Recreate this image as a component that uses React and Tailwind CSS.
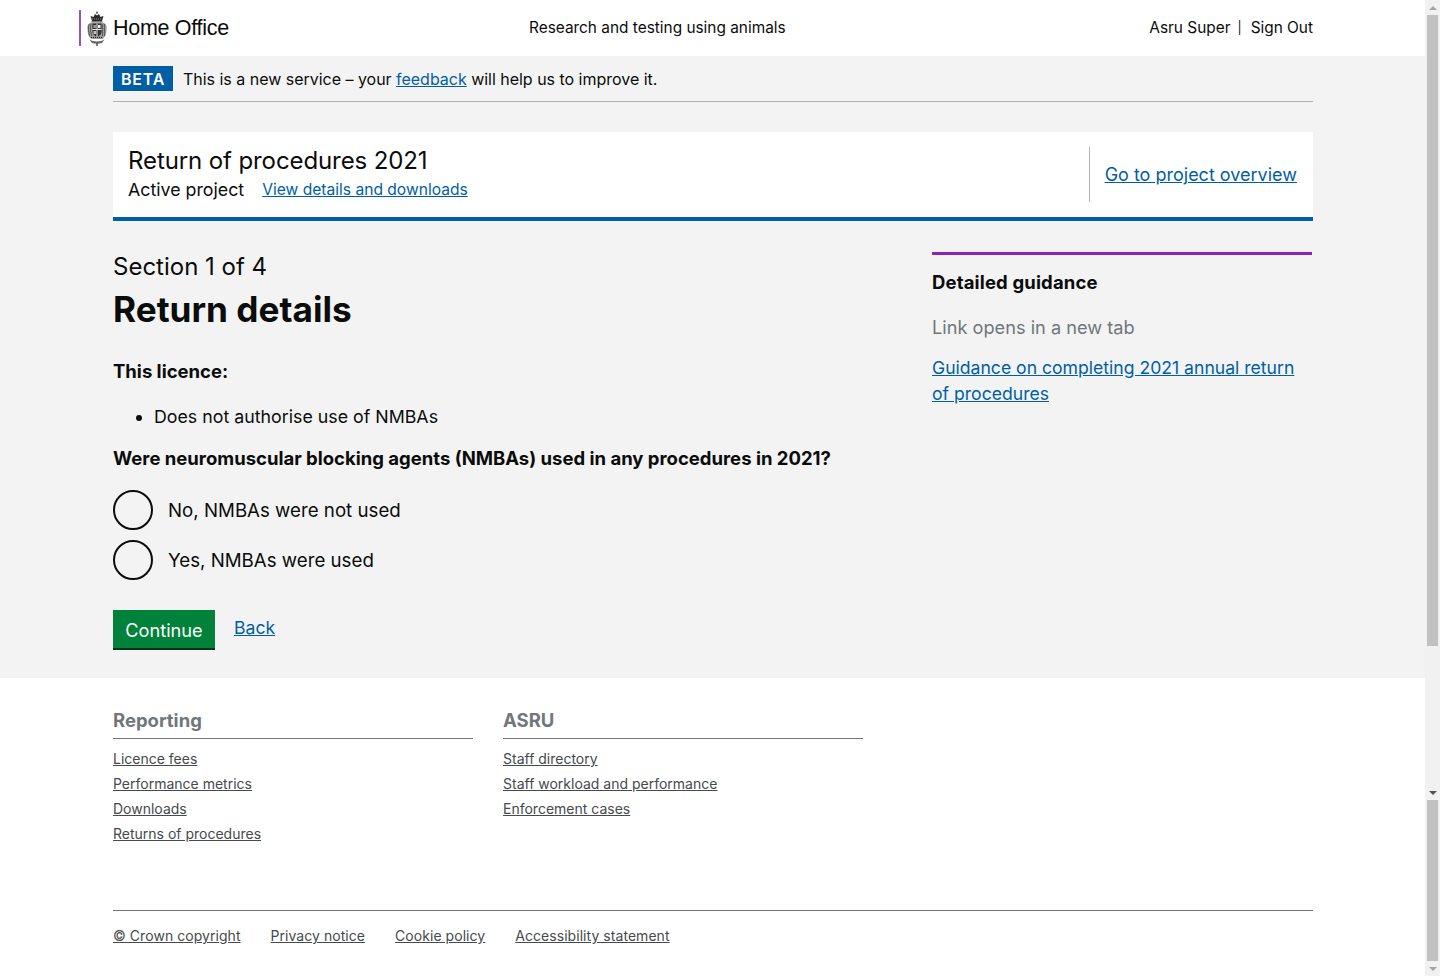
import React from 'react';

const Crest = () => (
  <svg width="20" height="35" viewBox="0 0 20 35" className="block">
    {/* crown */}
    <path d="M10 0l1.200 2.500h-2.400z" fill="#333" />
    <path d="M5 10 L3.500 5 L6.500 6 L8 3 L10 4.500 L12 3 L13.500 6 L16.500 5 L15 10z" fill="#2a2a2a" />
    <path d="M5 8h10" stroke="#aaa" strokeWidth="0.800" strokeDasharray="1 1" />
    <rect x="4.500" y="10" width="11" height="1.500" fill="#777" />
    {/* supporters */}
    <path d="M4 11.500 C1 12.500 0 15 0.500 18 C0.500 23 1.500 26 4.500 28 L15.500 28 C18.500 26 19.500 23 19.500 18 C20 15 19 12.500 16 11.500z" fill="#9a9a9a" />
    <path d="M1.500 14h3M1 16h4M1 18h4M1 20h4M1.500 22h3.500M2 24h3M15 14h3.500M15 16h4M15 18h4M15 20h4M15 22h3.500M15 24h3M4 26.500h12" stroke="#222" strokeWidth="1" strokeDasharray="1 1" />
    {/* shield */}
    <path d="M5.500 12.500h9v8c0 3-2.500 4.500-4.500 5.500C8 25 5.500 23.500 5.500 20.500z" fill="#333" />
    <path d="M10 12.500v13.500M5.500 18.500h9" stroke="#e5e5e5" strokeWidth="1" />
    <rect x="11" y="14" width="2.500" height="3" fill="#f0f0f0" />
    <rect x="6.500" y="20" width="2.500" height="3" fill="#c4c4c4" />
    <rect x="6.500" y="14" width="2.500" height="3" fill="#999" />
    {/* motto */}
    <path d="M2.500 28.500 C6 31 14 31 17.500 28.500 L15 32 C12 33 8 33 5 32z" fill="#666" />
    <path d="M10 32v3" stroke="#555" strokeWidth="1.500" />
  </svg>
);

const Scrollbar = () => (
  <div className="w-[15px] h-full shrink-0 flex flex-col bg-[#f1f1f1] pl-[2px] pr-[2px]">
    <div className="h-[15px] shrink-0 flex items-center justify-center">
      <div className="w-0 h-0 border-l-[4px] border-r-[4px] border-b-[4px] border-l-transparent border-r-transparent border-b-[#a3a3a3]" />
    </div>
    <div className="h-[631px] shrink-0 bg-[#c1c1c1]" />
    <div className="h-[139px] shrink-0" />
    <div className="h-[15px] shrink-0 flex items-center justify-center">
      <div className="w-0 h-0 border-l-[4px] border-r-[4px] border-t-[4px] border-l-transparent border-r-transparent border-t-[#505050]" />
    </div>
    <div className="h-[161px] shrink-0 bg-[#c1c1c1]" />
    <div className="h-[15px] shrink-0 flex items-center justify-center">
      <div className="w-0 h-0 border-l-[4px] border-r-[4px] border-t-[4px] border-l-transparent border-r-transparent border-t-[#a3a3a3]" />
    </div>
  </div>
);

const Radio = ({ label }) => (
  <label className="flex items-center h-10 gap-[15px]">
    <span className="w-10 h-10 rounded-full border-2 border-[#0b0c0c] shrink-0" />
    <span className="pt-[2px] text-[18.7px] text-[#0b0c0c]">{label}</span>
  </label>
);

const FooterCol = ({ title, links }) => (
  <div className="w-[360px]">
    <h3 className="text-[18.500px] leading-[25px] font-bold text-[#6f777b] pb-[5px] border-b border-[#6f777b]">{title}</h3>
    <ul className="mt-[7px]">
      {links.map(l => (
        <li key={l} className="h-[25px] leading-[25px] text-[14px]">
          <a href="#" className="underline text-[#454a4c]">{l}</a>
        </li>
      ))}
    </ul>
  </div>
);

export default function App() {
  return (
    <div className="flex w-full h-[976px] overflow-hidden bg-white text-[#0b0c0c] font-['Inter',sans-serif]">
      <div className="flex-1 min-w-0 flex flex-col">
        <header className="h-14 bg-white flex items-start pl-[79px] pr-[112px] shrink-0">
          <div className="flex items-center w-[450px] h-9 mt-[10px] border-l-2 border-[#9b51b8] pl-[6px]">
            <Crest />
            <span className="ml-[6px] text-[21.500px] tracking-[-0.3px] font-['Liberation_Sans',sans-serif] text-[#0b0c0c]">Home Office</span>
          </div>
          <div className="text-[15.400px] leading-[55px]">Research and testing using animals</div>
          <div className="ml-auto text-[15.400px] leading-[55px] flex">
            <a href="#">Asru Super</a>
            <span className="ml-[7px] mr-[9px] text-[12.500px]">|</span>
            <a href="#">Sign Out</a>
          </div>
        </header>

        <main className="flex-1 bg-[#f3f3f3] pl-[113px] pr-[112px] min-h-0">
          <div className="h-[36px] mt-[10px] border-b border-[#b1b4b6] flex items-start">
            <strong className="h-[25px] w-[60px] bg-[#005ea5] text-white text-[16px] tracking-[0.8px] font-semibold leading-[26px] text-center">BETA</strong>
            <p className="ml-[10px] text-[16px] leading-[26px] tracking-[-0.02px]">
              This is a new service – your <a href="#" className="underline text-[#005ea5]">feedback</a> will help us to improve it.
            </p>
          </div>

          <div className="mt-[30px] h-[89px] bg-white border-b-4 border-[#005ea5] flex items-center justify-between pl-[15px] pr-[16px]">
            <div>
              <div className="text-[24px] leading-[30px] tracking-[-0.1px]">Return of procedures 2021</div>
              <div className="flex items-center mt-[1px] leading-[26px]">
                <span className="text-[17.800px]">Active project</span>
                <a href="#" className="ml-[18px] text-[15.600px] underline text-[#005ea5]">View details and downloads</a>
              </div>
            </div>
            <div className="h-[55px] border-l border-[#b1b4b6] pl-[15px] flex items-center">
              <a href="#" className="text-[18px] underline text-[#005ea5]">Go to project overview</a>
            </div>
          </div>

          <div className="flex justify-between mt-[31px]">
            <div className="w-[780px]">
              <div className="text-[24px] leading-[30px]">Section 1 of 4</div>
              <h1 className="text-[35.200px] leading-[45px] font-bold mt-[5px]">Return details</h1>
              <p className="text-[18.500px] leading-[25px] font-bold mt-[27px]">This licence:</p>
              <ul className="list-disc pl-[41px] mt-[20px]">
                <li className="text-[17.800px] leading-[25px]">Does not authorise use of NMBAs</li>
              </ul>
              <p className="text-[18.500px] leading-[25px] font-bold mt-[17px] whitespace-nowrap">Were neuromuscular blocking agents (NMBAs) used in any procedures in 2021?</p>
              <div className="mt-[19px] flex flex-col gap-[10px]">
                <Radio label="No, NMBAs were not used" />
                <Radio label="Yes, NMBAs were used" />
              </div>
              <div className="flex items-start mt-[30px]">
                <button className="w-[102px] h-10 bg-[#00823b] border-b-2 border-[#003618] text-white text-[18.200px] leading-[40px]">Continue</button>
                <a href="#" className="ml-[19px] text-[17.600px] leading-[36px] underline text-[#005ea5]">Back</a>
              </div>
            </div>
            <aside className="w-[380px] mr-[1px] border-t-[3px] border-[#8f23b3] pt-[15px]">
              <h3 className="text-[18.500px] leading-[25px] font-bold tracking-[0.15px]">Detailed guidance</h3>
              <p className="text-[18.200px] leading-[25px] text-[#6f777b] mt-[20px]">Link opens in a new tab</p>
              <a href="#" className="block text-[17.600px] leading-[26px] underline text-[#005ea5] mt-[15px]">Guidance on completing 2021 annual return of procedures</a>
            </aside>
          </div>
        </main>

        <footer className="h-[298px] shrink-0 bg-white pl-[113px] pr-[112px] pt-[30px]">
          <div className="flex gap-[30px] h-[202px]">
            <FooterCol title="Reporting" links={['Licence fees', 'Performance metrics', 'Downloads', 'Returns of procedures']} />
            <FooterCol title="ASRU" links={['Staff directory', 'Staff workload and performance', 'Enforcement cases']} />
          </div>
          <div className="border-t border-[#6f777b] flex gap-[30px] pt-[12px] text-[14px] leading-[25px] tracking-[0.05px]">
            <a href="#" className="underline text-[#454a4c]">© Crown copyright</a>
            <a href="#" className="underline text-[#454a4c]">Privacy notice</a>
            <a href="#" className="underline text-[#454a4c]">Cookie policy</a>
            <a href="#" className="underline text-[#454a4c]">Accessibility statement</a>
          </div>
        </footer>
      </div>
      <Scrollbar />
    </div>
  );
}
